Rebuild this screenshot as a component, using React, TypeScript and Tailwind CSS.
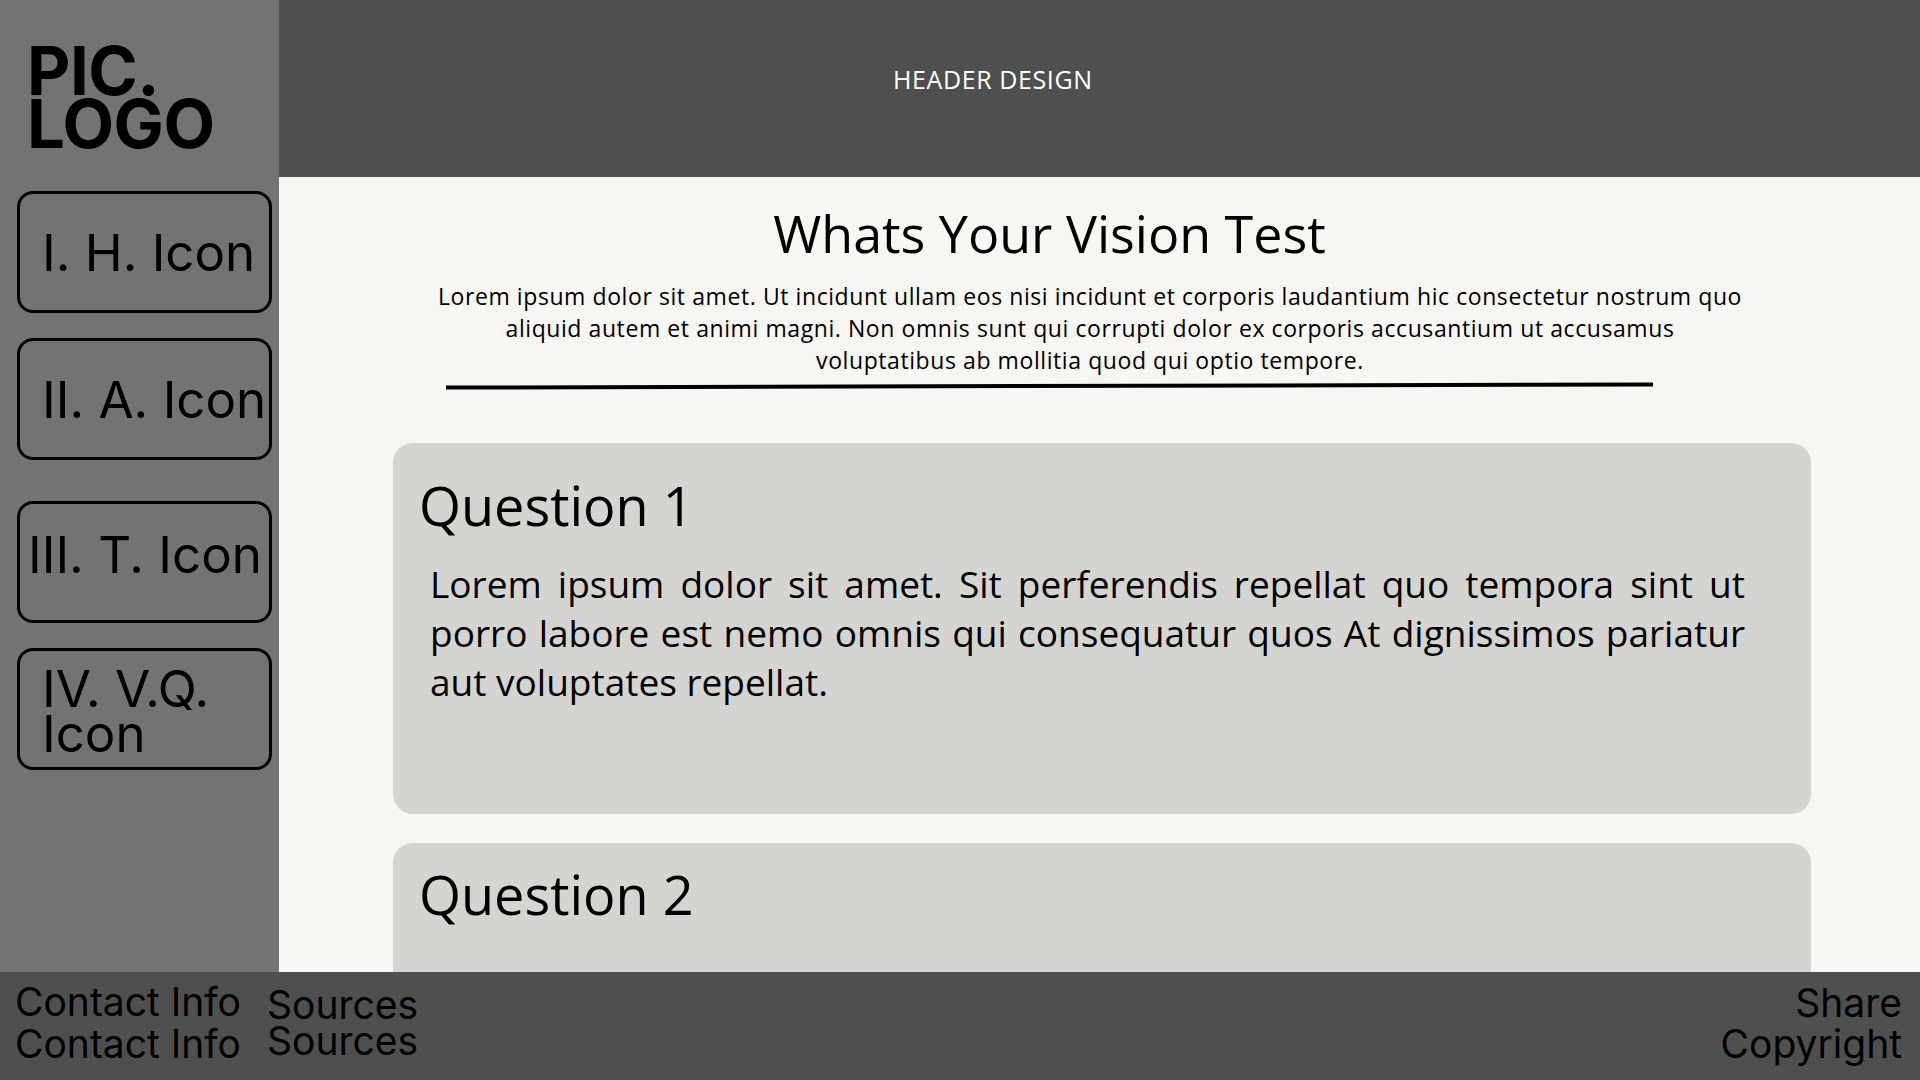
import React from "react";

const navFont = { fontFamily: "Inter, 'Noto Sans', sans-serif" };
const bodyFont = { fontFamily: "'Open Sans', 'Noto Sans', sans-serif" };

function NavBox({ children, className }: { children: React.ReactNode; className: string }) {
  return (
    <div
      className={`ml-[17px] w-[255px] h-[122px] shrink-0 border-[3px] border-black rounded-[16px] flex items-center overflow-visible whitespace-nowrap text-black ${className}`}
      style={navFont}
    >
      {children}
    </div>
  );
}

export default function App() {
  return (
    <div className="w-[1920px] h-[1080px] flex flex-col overflow-hidden bg-[#f7f6f2]">
      <div className="flex h-[972px] shrink-0">
        <aside className="w-[279px] shrink-0 bg-[#737373] flex flex-col">
          <div
            className="pl-[27px] pt-[44px] text-[67px] font-bold leading-[53px] text-black tracking-[-0.5px]"
            style={navFont}
          >
            PIC.
            <br />
            LOGO
          </div>
          <NavBox className="mt-[41px]">
            <span className="pl-[22px] text-[51px] leading-none">I. H. Icon</span>
          </NavBox>
          <NavBox className="mt-[25px]">
            <span className="pl-[22px] text-[51px] leading-none">II. A. Icon</span>
          </NavBox>
          <NavBox className="mt-[41px]">
            <span className="pl-[8px] pb-[15px] text-[51px] leading-none">III. T. Icon</span>
          </NavBox>
          <NavBox className="mt-[25px]">
            <span className="pl-[22px] pt-[3px] text-[51px] leading-[45px] whitespace-normal">
              IV. V.Q.
              <br />
              Icon
            </span>
          </NavBox>
        </aside>
        <div className="flex-1 flex flex-col min-w-0">
          <header className="h-[177px] shrink-0 bg-[#4f4f4f] pl-[614px] pt-[61px]">
            <span className="text-white text-[25px] tracking-[0.6px]" style={bodyFont}>
              HEADER DESIGN
            </span>
          </header>
          <main className="flex-1 overflow-hidden flex flex-col" style={bodyFont}>
            <h1 className="shrink-0 ml-[167px] w-[1207px] text-center text-[52px] leading-[60px] mt-[26px] text-black">
              Whats Your Vision Test
            </h1>
            <p className="shrink-0 ml-[156px] w-[1310px] text-center text-[23px] tracking-[0.58px] leading-[32px] mt-[17px] text-black whitespace-nowrap">
              Lorem ipsum dolor sit amet. Ut incidunt ullam eos nisi incidunt et corporis laudantium hic consectetur nostrum quo
              <br />
              aliquid autem et animi magni. Non omnis sunt qui corrupti dolor ex corporis accusantium ut accusamus
              <br />
              voluptatibus ab mollitia quod qui optio tempore.
            </p>
            <div className="shrink-0 ml-[167px] w-[1207px] h-[4px] bg-black mt-[8px] rotate-[-0.15deg]" />
            <section className="shrink-0 ml-[114px] w-[1418px] h-[371px] mt-[55px] bg-[#d5d4d0] rounded-[20px] pl-[26px] pr-[66px] pt-[29px]">
              <h2 className="text-[54px] leading-[66px] text-black">Question 1</h2>
              <div className="pl-[11px] mt-[21px] text-[37px] leading-[49px] text-black whitespace-nowrap">
                <div className="text-justify [text-align-last:justify]">
                  Lorem ipsum dolor sit amet. Sit perferendis repellat quo tempora sint ut
                </div>
                <div className="text-justify [text-align-last:justify]">
                  porro labore est nemo omnis qui consequatur quos At dignissimos pariatur
                </div>
                <div>aut voluptates repellat.</div>
              </div>
            </section>
            <section className="shrink-0 ml-[114px] w-[1418px] h-[300px] mt-[29px] bg-[#d5d4d0] rounded-[20px] pl-[26px] pt-[18px]">
              <h2 className="text-[54px] leading-[66px] text-black">Question 2</h2>
            </section>
          </main>
        </div>
      </div>
      <footer className="h-[108px] shrink-0 bg-[#4f4f4f] flex text-black" style={navFont}>
        <div className="pl-[15px] pt-[9px] text-[39px] leading-[42px]">
          <div>Contact Info</div>
          <div>Contact Info</div>
        </div>
        <div className="pl-[26px] pt-[15px] text-[39px] leading-[36px]">
          <div>Sources</div>
          <div>Sources</div>
        </div>
        <div className="ml-auto pr-[18px] pt-[10px] text-[39px] leading-[41px] text-right">
          <div>Share</div>
          <div>Copyright</div>
        </div>
      </footer>
    </div>
  );
}
